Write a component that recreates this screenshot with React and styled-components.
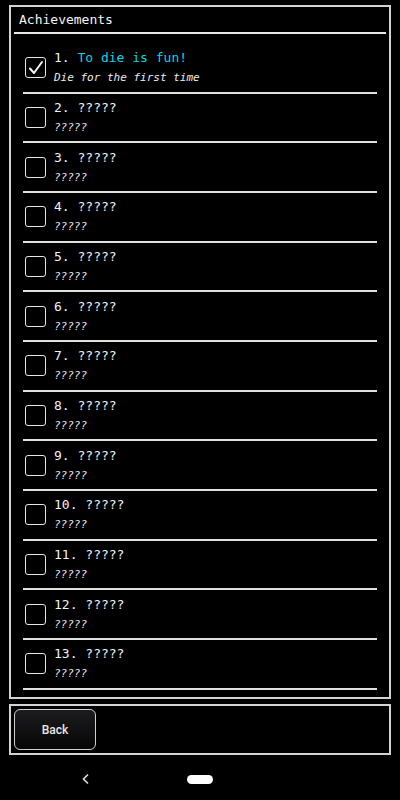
import React from 'react';
import styled, { createGlobalStyle } from 'styled-components';

const GlobalStyle = createGlobalStyle`
	html, body {
		margin: 0;
		padding: 0;
		background: #000;
	}
	* {
		box-sizing: border-box;
	}
`;

const Screen = styled.div`
	width: 400px;
	height: 800px;
	background: #000;
	display: flex;
	flex-direction: column;
	font-family: 'DejaVu Sans Mono', monospace;
	color: #f2f2f2;
`;

const Content = styled.div`
	flex: 1;
	display: flex;
	flex-direction: column;
	gap: 5px;
	padding: 5px 9px 5px 9px;
`;

const Panel = styled.div`
	border: 2px solid #d4d4d4;
	display: flex;
	flex-direction: column;
	${(props) => props.grow && 'flex: 1;'}
	${(props) => props.height && `height: ${props.height}px;`}
`;

const Header = styled.div`
	margin: 0 3px;
	padding: 3px 5px 0;
	height: 27px;
	border-bottom: 2px solid #e8e8e8;
	font-size: 13px;
	line-height: 20px;
	color: #f4f4f4;
`;

const List = styled.ul`
	list-style: none;
	margin: 10px 0 0 0;
	padding: 0 12px 0 12px;
`;

const Row = styled.li`
	height: 49.67px;
	border-bottom: 2px solid #e0e0e0;
	display: flex;
	align-items: center;
	gap: 8px;
	padding: 0 0 0 2px;
`;

const Box = styled.div`
	width: 21px;
	height: 21px;
	border: 1.5px solid #e6e6e6;
	border-radius: 3px;
	display: flex;
	align-items: center;
	justify-content: center;
	flex-shrink: 0;
`;

const Texts = styled.div`
	display: flex;
	flex-direction: column;
	padding-top: 1px;
`;

const Title = styled.div`
	font-size: 13px;
	line-height: 20px;
	white-space: pre;
`;

const Name = styled.span`
	color: ${(props) => (props.unlocked ? '#00d8e8' : '#f2f2f2')};
`;

const Desc = styled.div`
	font-size: 11px;
	line-height: 20px;
	font-style: italic;
	color: #ededed;
`;

const Footer = styled.div`
	height: 100%;
	padding: 3px;
	display: flex;
	align-items: center;
`;

const BackButton = styled.button`
	width: 82px;
	height: 41px;
	border: 1.5px solid #cfcfcf;
	border-radius: 6px;
	background: linear-gradient(#1c1c1e, #060607);
	color: #e8e8e8;
	font-family: Roboto, 'Liberation Sans', sans-serif;
	font-size: 12px;
	font-weight: 500;
	display: flex;
	align-items: center;
	justify-content: center;
`;

const NavBar = styled.div`
	height: 40px;
	display: flex;
	align-items: center;
	gap: 96px;
	padding-left: 81px;
	padding-bottom: 2px;
`;

const Pill = styled.div`
	width: 26px;
	height: 9px;
	border-radius: 5px;
	background: #fff;
`;

const achievements = [
	{ name: 'To die is fun!', desc: 'Die for the first time', unlocked: true },
	...Array.from({ length: 12 }, () => ({ name: '?????', desc: '?????', unlocked: false })),
];

const Check = () => (
	<svg width="18" height="18" viewBox="0 0 18 18">
		<path d="M3 9.5 L7 14 L15 3" fill="none" stroke="#f4f4f4" strokeWidth="2" strokeLinecap="round" strokeLinejoin="round" />
	</svg>
);

const App = () => {
	return (
		<Screen>
			<GlobalStyle />
			<Content>
				<Panel grow>
					<Header>Achievements</Header>
					<List>
						{achievements.map((a, i) => (
							<Row key={i}>
								<Box>{a.unlocked && <Check />}</Box>
								<Texts>
									<Title>
										{i + 1}. <Name unlocked={a.unlocked}>{a.name}</Name>
									</Title>
									<Desc>{a.desc}</Desc>
								</Texts>
							</Row>
						))}
					</List>
				</Panel>
				<Panel height={51}>
					<Footer>
						<BackButton>Back</BackButton>
					</Footer>
				</Panel>
			</Content>
			<NavBar>
				<svg width="10" height="12" viewBox="0 0 10 12">
					<path d="M7 1.5 L2.5 6 L7 10.5" fill="none" stroke="#e0e0e0" strokeWidth="1.6" />
				</svg>
				<Pill />
			</NavBar>
		</Screen>
	);
};

export default App;
